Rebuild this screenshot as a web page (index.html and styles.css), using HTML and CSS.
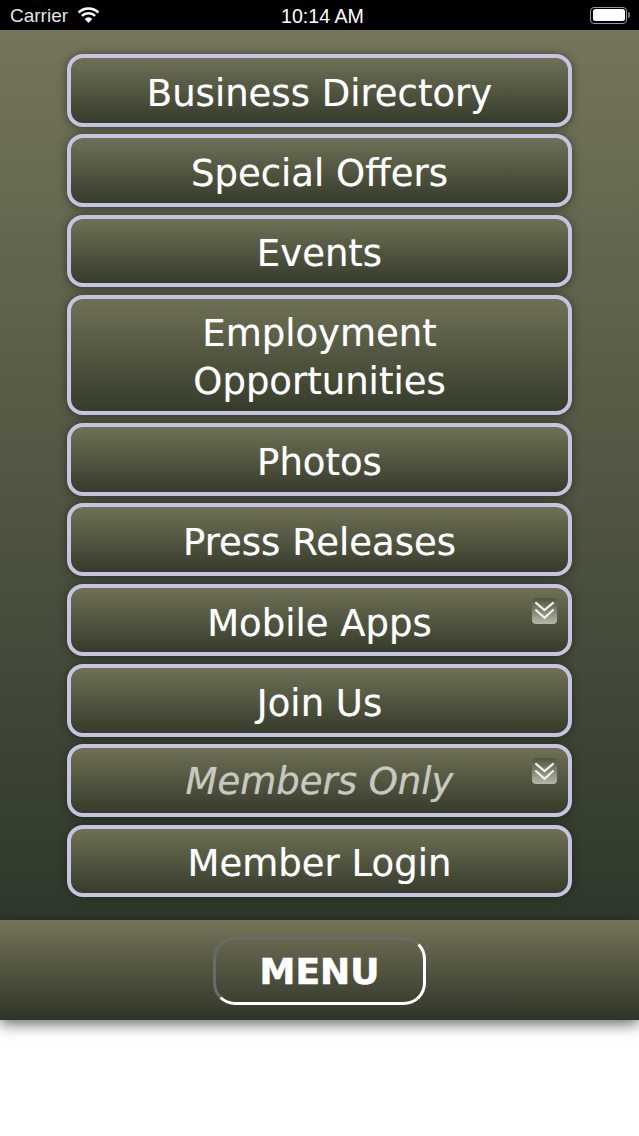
FILE: index.html
```html
<!DOCTYPE html>
<html lang="en">
<head>
<meta charset="utf-8">
<title>Menu</title>
<link rel="stylesheet" href="styles.css">
</head>
<body>
<header class="status">
  <div class="status-left">
    <span class="carrier">Carrier</span>
    <svg class="wifi" width="23" height="16" viewBox="0 0 23 16"><path d="M11.5 16 7.7 11.9a5.4 5.4 0 0 1 7.6 0Z" fill="#fff"/><path d="M4.9 8.9a9.6 9.6 0 0 1 13.2 0" fill="none" stroke="#fff" stroke-width="2.6"/><path d="M1.6 5.5a14.4 14.4 0 0 1 19.8 0" fill="none" stroke="#fff" stroke-width="2.6"/></svg>
  </div>
  <span class="time">10:14 AM</span>
  <div class="status-right">
    <div class="battery"><div class="battery-fill"></div></div>
    <div class="battery-cap"></div>
  </div>
</header>
<main class="panel">
  <a class="btn">Business Directory</a>
  <a class="btn">Special Offers</a>
  <a class="btn">Events</a>
  <a class="btn btn-tall">Employment<br>Opportunities</a>
  <a class="btn">Photos</a>
  <a class="btn">Press Releases</a>
  <a class="btn">Mobile Apps
    <span class="chev"><svg width="25" height="25" viewBox="0 0 26 26"><path d="M3.5 4.5 13 12.5 22.5 4.5M3.5 12 13 20.5 22.5 12" fill="none" stroke="#f4f4ea" stroke-width="2.2"/></svg></span>
  </a>
  <a class="btn">Join Us</a>
  <a class="btn btn-muted">Members Only
    <span class="chev"><svg width="25" height="25" viewBox="0 0 26 26"><path d="M3.5 4.5 13 12.5 22.5 4.5M3.5 12 13 20.5 22.5 12" fill="none" stroke="#f4f4ea" stroke-width="2.2"/></svg></span>
  </a>
  <a class="btn">Member Login</a>
</main>
<footer class="footer">
  <a class="menu">MENU</a>
</footer>
</body>
</html>
```
FILE: styles.css
```css
* { box-sizing: border-box; }
html, body { margin: 0; padding: 0; }
body {
  width: 639px;
  height: 1136px;
  background: #fff;
  overflow: hidden;
  font-family: "DejaVu Sans", Verdana, sans-serif;
}
.status {
  height: 30px;
  background: #000;
  color: #fff;
  font-family: "Liberation Sans", Arial, sans-serif;
  font-size: 19px;
  display: flex;
  align-items: center;
  justify-content: space-between;
  padding: 0 10px;
  position: relative;
}
.status-left { display: flex; align-items: center; gap: 9px; color: #e4e4e4; }
.carrier { position: relative; top: 1px; }
.wifi { margin-top: -1px; }
.time { position: absolute; left: 281px; top: 6px; line-height: 20px; font-size: 19.6px; }
.status-right { display: flex; align-items: center; gap: 1px; margin-right: -1px; }
.battery {
  width: 37px;
  height: 17px;
  border: 1px solid #9a9a9a;
  border-radius: 4px;
  padding: 1.5px;
}
.battery-fill { width: 100%; height: 100%; background: #fff; border-radius: 2.5px; }
.battery-cap { width: 2px; height: 6px; background: #777; border-radius: 0 2px 2px 0; }
.panel {
  height: 890px;
  padding: 24px 67px 0;
  display: flex;
  flex-direction: column;
  gap: 7.8px;
  background: linear-gradient(#75755b, #2e392b);
}
.btn {
  position: relative;
  height: 72.5px;
  flex: none;
  border: 4.5px solid #c6c4e0;
  border-radius: 16px;
  background: linear-gradient(#6f7056, #353c2b);
  box-shadow: 0 1px 10px rgba(20, 22, 12, .55);
  color: #fff;
  font-size: 37px;
  line-height: 48px;
  text-align: center;
  text-shadow: 0 0 1px rgba(255, 255, 255, .45);
  display: flex;
  align-items: center;
  justify-content: center;
  padding-top: 7px;
}
.btn-tall { height: 120.5px; display: block; padding-top: 11px; }
.btn-muted { color: #c8c8c0; font-style: italic; padding-top: 3px; }
.chev {
  position: absolute;
  right: 11px;
  top: 10px;
  width: 25px;
  height: 26px;
  border-radius: 4px;
  background: linear-gradient(#4f5440, #b4b8a8);
  display: flex;
  align-items: center;
  justify-content: center;
}
.footer {
  height: 100px;
  background: linear-gradient(#75735a, #2f3527);
  box-shadow: 0 4px 14px rgba(0, 0, 0, .6);
  display: flex;
  justify-content: center;
  padding-top: 17px;
  position: relative;
}
.menu {
  width: 213px;
  height: 68px;
  border-radius: 22px;
  border: 3px solid;
  border-color: #6a6a68 #fff #fff #6a6a68;
  color: #fff;
  font-weight: bold;
  font-size: 36px;
  line-height: 64px;
  text-align: center;
  -webkit-text-stroke: .6px #fff;
}
```
